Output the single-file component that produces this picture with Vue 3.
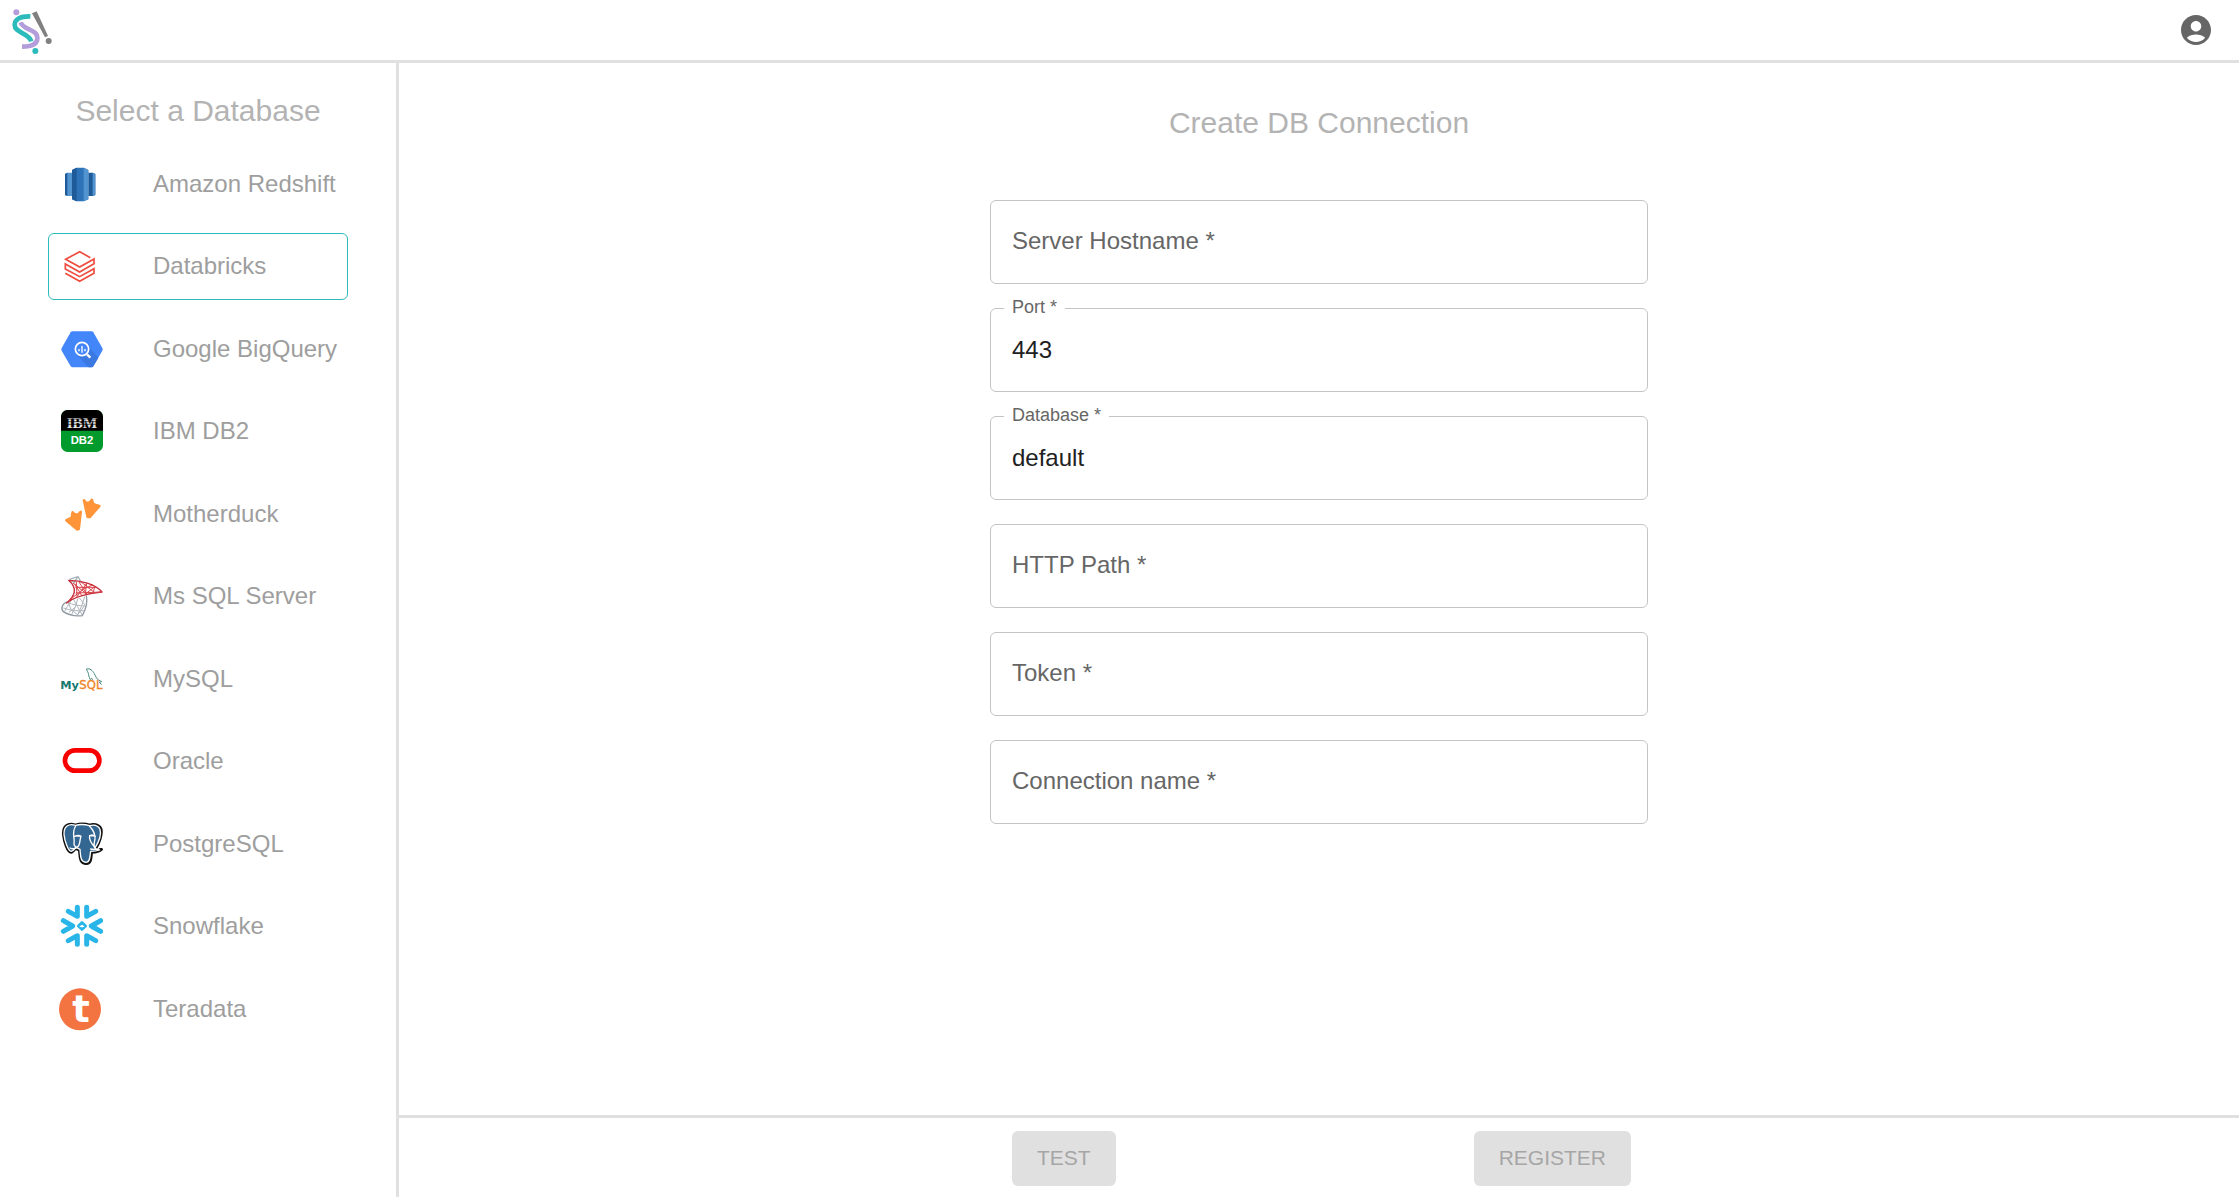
<script setup>
import { ref, computed } from 'vue';

// Supported databases
const databases = [
  { id: 'redshift', name: 'Amazon Redshift' },
  { id: 'databricks', name: 'Databricks' },
  { id: 'bigquery', name: 'Google BigQuery' },
  { id: 'db2', name: 'IBM DB2' },
  { id: 'motherduck', name: 'Motherduck' },
  { id: 'mssql', name: 'Ms SQL Server' },
  { id: 'mysql', name: 'MySQL' },
  { id: 'oracle', name: 'Oracle' },
  { id: 'postgresql', name: 'PostgreSQL' },
  { id: 'snowflake', name: 'Snowflake' },
  { id: 'teradata', name: 'Teradata' }
];

const selectedDatabase = ref('databricks');

// Connection form
const fields = ref([
  { id: 'hostname', label: 'Server Hostname', value: '' },
  { id: 'port', label: 'Port', value: '443' },
  { id: 'database', label: 'Database', value: 'default' },
  { id: 'http-path', label: 'HTTP Path', value: '' },
  { id: 'token', label: 'Token', value: '' },
  { id: 'connection-name', label: 'Connection name', value: '' }
]);

const focusedField = ref('');

// Every field is required before testing or registering
const isIncomplete = computed(() => fields.value.some((field) => field.value === ''));

// -- Methods --

// The label moves up to the border when the field has a value or the focus
function isLabelRaised(field) {
  return field.value !== '' || focusedField.value === field.id;
}
</script>

<template>
  <div class="page">
    <header class="top-bar">
      <a href="#" class="logo" aria-label="Home">
        <svg viewBox="0 0 210 180">
          <circle cx="49" cy="37" r="9" fill="#b39ddb" />
          <path d="M91 49C62 48 44 57 44 75C44 99 86 98 94 124" fill="none" stroke="#2bbbbb" stroke-width="14" />
          <path d="M59 67C66 93 112 86 112 114C112 132 96 140 66 140" fill="none" stroke="#fff" stroke-width="17" />
          <path d="M62 67C69 91 112 86 112 114C112 132 96 140 66 140" fill="none" stroke="#b39ddb" stroke-width="14" />
          <path d="M96 40L110 34L144 108L135 112Z" fill="#808080" />
          <circle cx="146" cy="123" r="9" fill="#808080" />
          <circle cx="106" cy="153" r="9" fill="#2bbbbb" />
        </svg>
      </a>
      <button type="button" class="account" aria-label="Account">
        <svg viewBox="0 0 24 24">
          <path d="M12 2C6.48 2 2 6.48 2 12s4.48 10 10 10 10-4.48 10-10S17.52 2 12 2zm0 4c1.93 0 3.5 1.57 3.5 3.5S13.93 13 12 13s-3.5-1.57-3.5-3.5S10.07 6 12 6zm0 14c-2.03 0-4.43-.82-6.14-2.88C7.55 15.8 9.68 15 12 15s4.45.8 6.14 2.12C16.43 19.18 14.03 20 12 20z" />
        </svg>
      </button>
    </header>

    <div class="content">
      <aside class="sidebar">
        <h2 class="sidebar-title">Select a Database</h2>
        <ul class="database-list">
          <li v-for="database in databases" :key="database.id">
            <button
              type="button"
              class="database"
              :class="{ 'selected': selectedDatabase === database.id }"
              @click="selectedDatabase = database.id"
            >
              <svg class="database-icon" viewBox="0 0 132 132" aria-hidden="true">
                <g v-if="database.id === 'redshift'">
                  <path d="M18 36L25 32H39V102H25L18 99Z" fill="#5294cf" />
                  <path d="M18 36L25 32V102L18 99Z" fill="#205b99" />
                  <path d="M88 32H102L109 36V99L102 102H88Z" fill="#205b99" />
                  <path d="M101 32L109 36V99L101 102Z" fill="#5294cf" />
                  <path d="M39 24L52 17H75L88 24V112L75 118H52L39 112Z" fill="#2e73b8" />
                  <path d="M39 24L53 17V118L39 112Z" fill="#205b99" />
                  <path d="M74 17L88 24V112L74 118Z" fill="#5294cf" />
                </g>
                <path
                  v-else-if="database.id === 'databricks'"
                  d="M94 41L62 23L20 46L62 69L105 45V59L62 84L19 60V75L62 98L105 74V88L62 112L19 88"
                  fill="none" stroke="#ef4b3e" stroke-width="5"
                />
                <g v-else-if="database.id === 'bigquery'">
                  <path d="M40 13H98Q101 13 103 16L130 63Q132 67 130 71L103 118Q101 121 98 121H40Q37 121 35 118L8 71Q6 67 8 63L35 16Q37 13 40 13Z" fill="#4386fa" />
                  <path d="M84 54L118 92L103 118Q101 121 98 121H89L54 84Z" fill="#3b78e0" />
                  <circle cx="69" cy="66" r="20" fill="#4386fa" stroke="#fff" stroke-width="5" />
                  <path d="M84 82L94 92" stroke="#fff" stroke-width="7" />
                  <path d="M60 66V73M69 57V77M78 66V73" stroke="#fff" stroke-width="4" />
                </g>
                <g v-else-if="database.id === 'db2'">
                  <rect x="6" y="3" width="126" height="126" rx="20" fill="#009b2c" />
                  <path d="M6 65V23A20 20 0 0 1 26 3H112A20 20 0 0 1 132 23V65Z" fill="#000" />
                  <text x="69" y="56" class="ibm-text" fill="#e6e6e6">IBM</text>
                  <path d="M24 30H114M24 38H114M24 46H114" stroke="#000" stroke-width="2" />
                  <text x="69" y="106" class="db2-text" fill="#fff">DB2</text>
                </g>
                <g v-else-if="database.id === 'motherduck'" fill="#ff9538" stroke="#ff9538" stroke-width="8" stroke-linejoin="round">
                  <path d="M75 25L80 31Q86 34 92 31L99 24L102 36L110 39L121 42L92 75L86 75Z" />
                  <path d="M41 61L47 67Q54 70 60 65L65 60L59 111L54 112L22 85L31 81L38 77Z" />
                </g>
                <g v-else-if="database.id === 'mssql'" fill="none" stroke-linejoin="round">
                  <path d="M31 16L57 8L67 26M31 16L48 27M57 8L46 24" stroke="#aab2bb" stroke-width="4" />
                  <path d="M26 83C8 89 5 105 13 113C30 124 53 127 70 125C81 105 87 87 82 65" stroke="#8f99a3" stroke-width="4" />
                  <path d="M24 84C40 92 60 96 79 96M13 102C33 109 54 112 75 110M39 75L25 98L16 113M57 73L48 101L38 121M77 68L67 98L55 124M28 84L36 107L58 124M43 75L55 97L70 124M61 72L79 94M48 100L30 115M77 95L55 123" stroke="#aeb5bc" stroke-width="3" />
                  <path d="M29 19C65 19 109 29 129 54C91 57 44 69 23 87C48 65 57 44 29 19Z" stroke="#c52c38" stroke-width="4" />
                  <path d="M52 23L54 68L83 28L79 60L107 38L103 56M42 27L83 60L60 24M49 40L112 40M50 57L129 54M65 23L107 56M29 80L75 44L101 33M47 30L68 64" stroke="#d9434b" stroke-width="3" />
                </g>
                <g v-else-if="database.id === 'mysql'">
                  <path d="M82 36C93 33 101 41 106 50C111 59 112 65 119 69L128 74L121 76L128 83M82 36L86 44C90 51 88 56 91 61L94 68L97 64L102 68" fill="none" stroke="#43897f" stroke-width="3" />
                  <text x="4" y="97" class="my-text" fill="#16796f">My</text>
                  <text x="61" y="97" class="sql-text" fill="#ef8427">SQL</text>
                </g>
                <rect v-else-if="database.id === 'oracle'" x="18" y="34" width="103" height="61" rx="30" fill="none" stroke="#f80000" stroke-width="14" />
                <g v-else-if="database.id === 'postgresql'" stroke-linejoin="round" stroke-linecap="round">
                  <!-- black silhouette first, then the white and blue head on top -->
                  <path d="M49 9C27 1 11 12 13 38C15 57 25 92 37 91C42 90 47 83 50 79L61 85C63 103 61 125 82 125C98 124 96 106 98 91C109 91 122 88 128 82C120 82 112 82 111 79C120 64 131 37 126 20C119 6 102 5 92 9C78 4 63 4 49 9Z" fill="#111" stroke="#111" stroke-width="8" />
                  <path d="M49 10C29 3 14 14 15 37C17 58 28 89 37 88C42 87 48 79 51 76L63 82C65 101 63 121 82 121C94 120 92 104 95 88C106 88 117 86 122 84C113 83 107 82 108 78C118 62 128 38 123 22C117 9 103 8 92 11C78 7 63 6 49 10Z" fill="#336791" stroke="#fff" stroke-width="4" />
                  <path d="M50 12C36 34 49 49 45 65C45 72 50 76 55 75C65 69 61 54 66 43C60 38 51 41 46 44M91 12C103 24 109 35 108 50C107 61 101 71 109 78M92 41C89 56 98 63 106 75M92 41C98 38 104 40 109 43M55 75C45 84 37 80 33 78M95 81C105 84 113 81 119 80" fill="none" stroke="#fff" stroke-width="4" />
                  <path d="M54 42L62 42M96 41L104 41" stroke="#fff" stroke-width="5" />
                </g>
                <g v-else-if="database.id === 'snowflake'" fill="none" stroke="#29b5e8" stroke-width="15" stroke-linecap="round" stroke-linejoin="round">
                  <path d="M55 10V37L28 22M83 10V37L110 22M55 121V95L28 110M83 121V95L110 110M13 50L41 66L13 82M125 50L97 66L125 82" />
                  <path d="M69 55L80 66L69 77L58 66Z" stroke-width="8" />
                </g>
                <g v-else>
                  <circle cx="63" cy="67" r="63" fill="#f37440" />
                  <text x="66" y="104" class="teradata-text" fill="#fff">t</text>
                </g>
              </svg>
              <span>{{ database.name }}</span>
            </button>
          </li>
        </ul>
      </aside>

      <main class="main">
        <form id="connection-form" class="connection-form" @submit.prevent>
          <h1 class="form-title">Create DB Connection</h1>
          <div class="field" v-for="field in fields" :key="field.id">
            <input
              :id="field.id"
              type="text"
              v-model="field.value"
              required
              @focus="focusedField = field.id"
              @blur="focusedField = ''"
            >
            <label :for="field.id" :class="{ 'raised': isLabelRaised(field) }">{{ field.label }}&nbsp;*</label>
          </div>
        </form>

        <footer class="actions">
          <div class="actions-row">
            <button type="button" :disabled="isIncomplete">TEST</button>
            <button type="submit" form="connection-form" :disabled="isIncomplete">REGISTER</button>
          </div>
        </footer>
      </main>
    </div>
  </div>
</template>

<style>
body {
  margin: 0;
  background-color: #fff;
}
</style>

<style scoped>
.page {
  display: flex;
  flex-direction: column;
  min-height: 100vh;
  font-family: Arial, "Liberation Sans", sans-serif;
}

.page *,
.page {
  box-sizing: border-box;
}

button,
input {
  font-family: inherit;
}

.top-bar {
  display: flex;
  align-items: center;
  justify-content: space-between;
  padding-right: 25px;
  border-bottom: 3px solid #e0e0e0;
}

.logo svg {
  display: block;
  width: 70px;
  height: 60px;
}

.account {
  padding: 0;
  border: none;
  background: none;
  cursor: pointer;
}

.account svg {
  display: block;
  width: 36px;
  height: 36px;
  fill: #666;
}

.content {
  display: flex;
  flex: 1;
}

/* Sidebar */
.sidebar {
  flex: none;
  width: 399px;
  padding: 24px 48px;
  border-right: 3px solid #e0e0e0;
}

.sidebar-title,
.form-title {
  margin: 0;
  font-size: 30px;
  font-weight: 400;
  line-height: 48px;
  text-align: center;
  color: #b3b3b3;
}

.database-list {
  display: flex;
  flex-direction: column;
  justify-content: space-between;
  min-height: 892px;
  margin: 15px 0 0;
  padding: 0;
  list-style: none;
}

.database {
  display: flex;
  align-items: center;
  gap: 50px;
  width: 100%;
  height: 67px;
  padding: 0 10px;
  border: 1px solid transparent;
  border-radius: 6px;
  background: none;
  font-size: 24px;
  color: #9e9e9e;
  text-align: left;
  white-space: nowrap;
  cursor: pointer;
}

.database.selected {
  border-color: #2bbbbb;
}

.database-icon {
  flex: none;
  width: 44px;
  height: 44px;
}

.ibm-text {
  font-family: "Liberation Serif", serif;
  font-size: 46px;
  font-weight: 700;
  text-anchor: middle;
}

.db2-text {
  font-family: "Liberation Sans Narrow", "Liberation Sans", sans-serif;
  font-size: 34px;
  font-weight: 700;
  text-anchor: middle;
}

.my-text {
  font-family: "DejaVu Sans", sans-serif;
  font-size: 34px;
  font-weight: 700;
}

.sql-text {
  font-family: "DejaVu Sans", sans-serif;
  font-size: 35px;
  stroke: #ef8427;
}

.teradata-text {
  font-family: "DejaVu Sans", sans-serif;
  font-size: 110px;
  font-weight: 700;
  text-anchor: middle;
}

/* Connection form */
.main {
  display: flex;
  flex: 1;
  flex-direction: column;
  min-width: 0;
}

.connection-form {
  display: flex;
  flex: 1;
  flex-direction: column;
  gap: 24px;
  width: 100%;
  max-width: 658px;
  margin: 0 auto;
  padding: 36px 0 24px;
}

.form-title {
  margin-bottom: 29px;
}

.field {
  position: relative;
}

.field input {
  display: block;
  width: 100%;
  height: 84px;
  padding: 0 21px;
  border: 1px solid #c4c4c4;
  border-radius: 6px;
  background: none;
  font-size: 24px;
  color: #212121;
}

.field input:focus {
  border-color: #2bbbbb;
  outline: none;
}

.field label {
  position: absolute;
  top: 24px;
  left: 14px;
  padding: 0 8px;
  background-color: #fff;
  font-size: 24px;
  line-height: 34px;
  color: #666;
  pointer-events: none;
}

.field label.raised {
  top: -13px;
  font-size: 18px;
  line-height: 24px;
}

/* Footer */
.actions {
  padding: 13px 0 11px;
  border-top: 3px solid #e0e0e0;
}

.actions-row {
  display: flex;
  justify-content: space-between;
  width: 100%;
  max-width: 658px;
  margin: 0 auto;
  padding: 0 17px 0 22px;
}

.actions button {
  padding: 8px 25px 10px;
  border: none;
  border-radius: 6px;
  background-color: #2bbbbb;
  font-size: 21px;
  line-height: 37px;
  color: #fff;
  cursor: pointer;
}

.actions button:disabled {
  background-color: #e0e0e0;
  color: #a6a6a6;
  cursor: default;
}
</style>
